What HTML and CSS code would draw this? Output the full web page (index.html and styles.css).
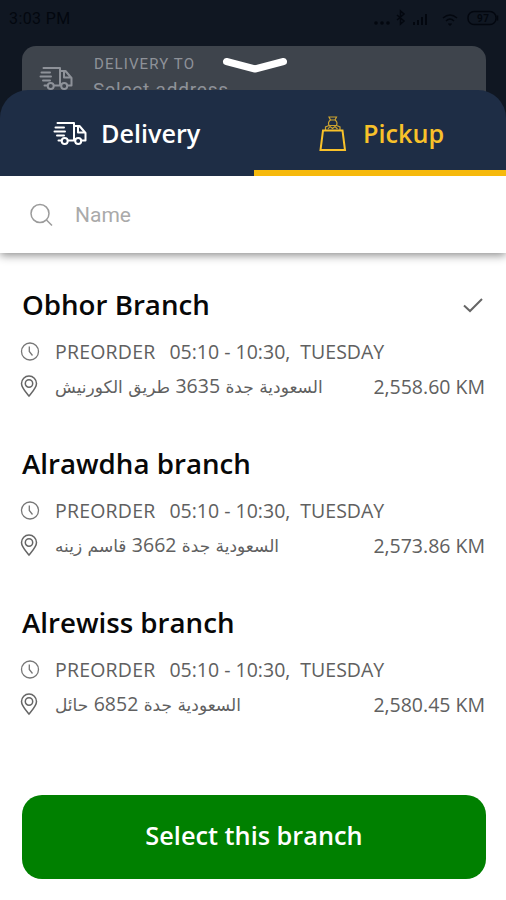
FILE: index.html
```html
<!DOCTYPE html>
<html lang="en">
<head>
<meta charset="utf-8">
<title>Pickup branches</title>
<link rel="stylesheet" href="styles.css">
</head>
<body>
<svg class="defs" aria-hidden="true">
  <symbol id="truck" viewBox="0 0 34 25">
    <g fill="none" stroke="currentColor" stroke-width="2" stroke-linejoin="round" stroke-linecap="round">
      <path d="M4.500 2H21V19.500M2.500 6.500H11M1.500 10.500H12M4 14.500H11M5.500 19.500H8.500M15 19.500H22M21 5H26.500L32.500 12V19.500H28.500M25 5V11.500H32"/>
      <circle cx="11.700" cy="20" r="3"/><circle cx="25.200" cy="20" r="3"/>
    </g>
  </symbol>
  <symbol id="clock" viewBox="0 0 20 20">
    <g fill="none" stroke="currentColor" stroke-width="1.300"><circle cx="10" cy="9.500" r="8.500"/><path d="M9.300 4.500V9.500L12.500 13.500"/></g>
  </symbol>
  <symbol id="pin" viewBox="0 0 18 23">
    <g fill="none" stroke="currentColor" stroke-width="1.500"><path d="M9 21C6 17 1.500 13 1.500 8.500A7.500 7.500 0 0 1 16.500 8.500C16.500 13 12 17 9 21Z"/><circle cx="9" cy="8.500" r="3.700"/></g>
  </symbol>
</svg>
<div class="backdrop">
  <div class="status">
    <span>3:03 PM</span>
    <svg class="status-icons" width="128" height="20" viewBox="0 0 128 20" fill="none" stroke="currentColor" stroke-width="1.500">
      <g fill="currentColor" stroke="none"><circle cx="4" cy="14" r="1.800"/><circle cx="10" cy="14" r="1.800"/><circle cx="16" cy="14" r="1.800"/><path d="M41 13h2v3h-2zM45 11h2v5h-2zM49 8h2v8h-2zM53 5h2v11h-2z"/></g>
      <path d="M25 6L32 12L28.500 15V2L32 5L25 11M71 9Q78 3 85 9M74 12Q78 8 82 12M76.500 14.500L78 16L79.500 14.500"/>
      <rect x="96" y="2.500" width="28" height="13" rx="6"/><path d="M125.500 6.500V11.500"/>
      <text x="105" y="13" font-size="10" font-weight="700" fill="currentColor" stroke="none">97</text>
    </svg>
  </div>
  <div class="address">
    <svg class="truck"><use href="#truck"/></svg>
    <div><div class="address-label">DELIVERY TO</div><div class="address-value">Select address</div></div>
  </div>
  <svg class="handle" width="66" height="20" viewBox="0 0 66 20"><path d="M4.500 5.500L33 13L61.500 5.500" fill="none" stroke="#fff" stroke-width="7" stroke-linecap="round" stroke-linejoin="round"/></svg>
</div>
<main class="sheet">
  <nav class="tabs">
    <div class="tab"><svg class="truck"><use href="#truck"/></svg><span>Delivery</span></div>
    <div class="tab active">
      <svg width="28" height="36" viewBox="0 0 28 36" fill="none" stroke="currentColor"><path stroke-width="2" d="M4 14.500H23.500L26 34H1.500L4 14.500Z"/><path stroke-width="1.200" opacity=".8" d="M6.500 14V11L10 9.500H17.500L21 11V14M10 9.500Q8.500 6 11.500 4L10 1H17.500L16 4Q19 6 17.500 9.500M11.500 4H16M9 13L11 10.500L13.500 12.500L16 10.500L18.500 13"/></svg>
      <span>Pickup</span>
    </div>
  </nav>
  <div class="search">
    <svg width="24" height="24" viewBox="0 0 24 24" fill="none" stroke="#9b9b9b" stroke-width="1.500"><circle cx="10" cy="10.500" r="9"/><path d="M16.500 17L22 22.500"/></svg>
    <span>Name</span>
  </div>
  <section class="list">
    <article class="branch">
      <div class="title"><h2>Obhor Branch</h2><svg width="20" height="15" viewBox="0 0 20 15"><path d="M1 7.500L7 13L19 1" fill="none" stroke="#666" stroke-width="2"/></svg></div>
      <div class="row"><svg class="clock"><use href="#clock"/></svg><span class="pre">PREORDER</span><span class="time">05:10 - 10:30,</span><span class="day">TUESDAY</span></div>
      <div class="row place"><svg class="pin"><use href="#pin"/></svg><span class="arabic" dir="rtl">السعودية جدة <b>3635</b> طريق الكورنيش</span><span class="distance">2,558.60 KM</span></div>
    </article>
    <article class="branch">
      <div class="title"><h2>Alrawdha branch</h2></div>
      <div class="row"><svg class="clock"><use href="#clock"/></svg><span class="pre">PREORDER</span><span class="time">05:10 - 10:30,</span><span class="day">TUESDAY</span></div>
      <div class="row place"><svg class="pin"><use href="#pin"/></svg><span class="arabic" dir="rtl">السعودية جدة <b>3662</b> قاسم زينه</span><span class="distance">2,573.86 KM</span></div>
    </article>
    <article class="branch">
      <div class="title"><h2>Alrewiss branch</h2></div>
      <div class="row"><svg class="clock"><use href="#clock"/></svg><span class="pre">PREORDER</span><span class="time">05:10 - 10:30,</span><span class="day">TUESDAY</span></div>
      <div class="row place"><svg class="pin"><use href="#pin"/></svg><span class="arabic" dir="rtl">السعودية جدة <b>6852</b> حائل</span><span class="distance">2,580.45 KM</span></div>
    </article>
  </section>
  <button class="select">Select this branch</button>
</main>
</body>
</html>
```
FILE: styles.css
```css
* { box-sizing: border-box; }
body { margin: 0; height: 900px; overflow: hidden; background: #fff; font-family: "Open Sans", "Noto Sans", sans-serif; }
svg { display: block; flex: none; }
.defs { position: absolute; width: 0; height: 0; }
.backdrop { position: relative; height: 120px; overflow: hidden; background: #101722; }
.status { display: flex; justify-content: space-between; height: 46px; padding: 9px 6px 0 9px; color: #03070f; font: 400 16px/20px Roboto, sans-serif; letter-spacing: .4px; }
.address { display: flex; height: 100px; margin: 0 20px 0 22px; border-radius: 14px; background: #3e444c; padding: 8px 17px; color: #8e9299; font-family: Roboto, sans-serif; }
.address .truck { margin-top: 12px; }
.address-label { margin-left: 21px; font-size: 15px; line-height: 20px; letter-spacing: 1.1px; }
.address-value { margin: 4px 0 0 20px; font-size: 19px; line-height: 24px; letter-spacing: .8px; }
.truck { width: 34px; height: 25px; }
.handle { position: absolute; left: 222px; top: 56px; }
.sheet { position: relative; height: 810px; margin-top: -30px; }
.tabs { display: flex; height: 86px; overflow: hidden; border-radius: 28px 28px 0 0; background: #1e2d45; color: #fff; font-size: 25.2px; font-weight: 600; line-height: 34px; }
.tab { display: flex; width: 254px; padding: 26px 0 0 53px; gap: 14px; }
.tab .truck { margin-top: 5px; }
.active { width: 252px; padding: 26px 0 0 65px; gap: 16px; color: #f8c12a; border-bottom: 6px solid #f6b90c; }
.search { display: flex; align-items: center; height: 77px; padding-left: 30px; gap: 21px; background: #fff; box-shadow: 0 2px 9px rgba(0,0,0,.48); clip-path: inset(0 0 -20px); color: #aaa; font: 21px/28px Roboto, sans-serif; }
.list { height: 542px; padding: 32px 21px 0 22px; }
.branch { height: 159px; }
.title { display: flex; height: 40px; align-items: center; justify-content: space-between; }
.title svg { margin-right: 2px; }
h2 { margin: -2px 0 0; font-size: 27.7px; line-height: 40px; font-weight: 600; color: #080808; }
.row { display: flex; height: 35px; align-items: center; color: #606060; font-size: 19.5px; line-height: 35px; white-space: pre; }
.title + .row { margin-top: 9px; }
.clock { width: 20px; height: 20px; margin: 0 12px 0 -2px; color: #777; }
.pre { margin-left: 3px; letter-spacing: .2px; }
.time { margin-left: 14px; }
.day { margin-left: 10px; }
.pin { width: 18px; height: 23px; margin: 0 17px 0 -2px; color: #666; }
.arabic { padding-top: 2px; font-family: "DejaVu Sans", sans-serif; font-size: 17px; }
.arabic b { font: 19.5px "Open Sans", sans-serif; }
.distance { margin-left: auto; }
.select { display: block; width: 464px; height: 84px; margin: 0 0 0 22px; padding: 0 0 4px; border: 0; border-radius: 20px; background: #008000; color: #fff; font: 600 25.3px/34px "Open Sans", sans-serif; }
```
